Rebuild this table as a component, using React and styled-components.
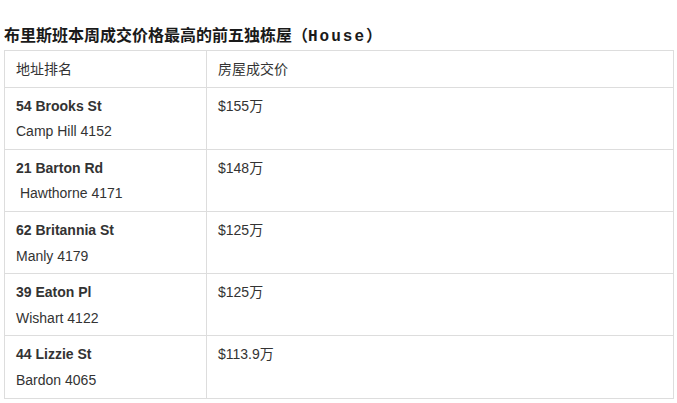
import React from "react";
import styled, { createGlobalStyle } from "styled-components";

const GlobalStyle = createGlobalStyle`
  body {
    margin: 0;
    background: #fff;
    font-family: "Liberation Sans", Arial, "Noto Sans CJK SC", sans-serif;
  }
`;

const rows = [
  { street: "54 Brooks St", suburb: "Camp Hill 4152", price: "$155万" },
  { street: "21 Barton Rd", suburb: "\u00a0Hawthorne 4171", price: "$148万" },
  { street: "62 Britannia St", suburb: "Manly 4179", price: "$125万" },
  { street: "39 Eaton Pl", suburb: "Wishart 4122", price: "$125万" },
  { street: "44 Lizzie St", suburb: "Bardon 4065", price: "$113.9万" },
];

export default function App() {
  return (
    <>
      <GlobalStyle />
      <Page>
        <Title>
          布里斯班本周成交价格最高的前五独栋屋（<Latin>House</Latin>）
        </Title>
        <Table>
          <colgroup>
            <Col $width={202} />
            <col />
          </colgroup>
          <thead>
            <tr>
              <Th>地址排名</Th>
              <Th>房屋成交价</Th>
            </tr>
          </thead>
          <tbody>
            {rows.map((r, i) => (
              <tr key={i}>
                <Td>
                  <Street>{r.street}</Street>
                  <div>{r.suburb}</div>
                </Td>
                <Td>{r.price}</Td>
              </tr>
            ))}
          </tbody>
        </Table>
      </Page>
    </>
  );
}

const Page = styled.div`
  padding: 24px 3px 0 4px;
`;

const Title = styled.h3`
  margin: 0 0 1px;
  font-family: "Liberation Serif", "Noto Sans CJK SC", serif;
  font-size: 16px;
  line-height: 24px;
  font-weight: bold;
  color: #1a1a1a;
  white-space: nowrap;
`;

const Latin = styled.span`
  font-family: "Liberation Mono", monospace;
  letter-spacing: 2px;
`;

const Table = styled.table`
  width: 670px;
  border-collapse: collapse;
  table-layout: fixed;
  font-size: 14px;
  line-height: 25.6px;
  color: #333;
`;

const Col = styled.col`
  width: ${(p) => p.$width}px;
`;

const Th = styled.th`
  border: 1px solid #ddd;
  padding: 6px 11px 4px;
  text-align: left;
  font-weight: normal;
`;

const Td = styled.td`
  border: 1px solid #ddd;
  padding: 6px 11px 4px;
  vertical-align: top;
`;

const Street = styled.div`
  font-weight: bold;
`;
